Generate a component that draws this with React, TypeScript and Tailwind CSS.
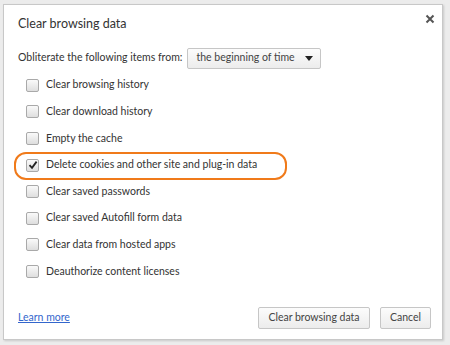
import React from 'react';

const items = [
  { label: 'Clear browsing history', checked: false },
  { label: 'Clear download history', checked: false },
  { label: 'Empty the cache', checked: false },
  { label: 'Delete cookies and other site and plug-in data', checked: true, highlight: true },
  { label: 'Clear saved passwords', checked: false },
  { label: 'Clear saved Autofill form data', checked: false },
  { label: 'Clear data from hosted apps', checked: false },
  { label: 'Deauthorize content licenses', checked: false },
];

function CheckBox({ checked }: { checked: boolean }) {
  return (
    <span className="relative flex h-[13px] w-[13px] items-center justify-center rounded-[2px] border border-[#a9a9a9] bg-gradient-to-b from-[#fafafa] to-[#dedede]">
      {checked && (
        <svg width="10" height="10" viewBox="0 0 10 10">
          <path d="M1.5 5.2 L4 7.8 L8.6 1.6" fill="none" stroke="#222" strokeWidth="1.8" />
        </svg>
      )}
    </span>
  );
}

export default function App() {
  return (
    <div className="h-[345px] w-[450px] whitespace-nowrap bg-[#ececec] pl-[3px] pt-[4px]" style={{ fontFamily: 'Lato, "Noto Sans", sans-serif' }}>
      <div className="flex h-[336px] w-[440px] flex-col border border-[#c8c8c8] bg-white shadow-[1px_1px_2px_rgba(0,0,0,0.15)]">
        {/* titulo */}
        <div className="flex h-[38px] items-start justify-between pl-[14px] pr-[6px] pt-[10px]">
          <span className="text-[12.5px] leading-[18px] text-[#333]">Clear browsing data</span>
          <svg width="10" height="10" viewBox="0 0 10 10" className="mr-[1px] mt-[-1px]">
            <path d="M1.5 1.5 L8.5 8.5 M8.5 1.5 L1.5 8.5" stroke="#555" strokeWidth="2" />
          </svg>
        </div>

        <div className="mt-[4px] flex h-[22px] items-center pl-[14px]">
          <span className="text-[10.5px] text-[#333]">Obliterate the following items from:</span>
          <div className="ml-[5px] flex h-[21px] w-[134px] items-center justify-between rounded-[2px] border border-[#c6c6c6] bg-gradient-to-b from-[#fcfcfc] to-[#ececec] pl-[8px] pr-[7px] text-[10.5px] text-[#444]">
            <span>the beginning of time</span>
            <svg width="8" height="5" viewBox="0 0 8 5">
              <path d="M0 0 L8 0 L4 5 Z" fill="#222" />
            </svg>
          </div>
        </div>

        <div className="mt-[3px] flex flex-col">
          {items.map((it) => (
            <div key={it.label} className="relative flex h-[26.6px] items-center gap-[7px] pl-[22px]">
              {it.highlight && (
                <span className="absolute left-[10px] top-[0px] h-[28px] w-[273px] rounded-[12px] border-[2.5px] border-[#f07a1a]" />
              )}
              <CheckBox checked={it.checked} />
              <span className="text-[10.5px] text-[#333]">{it.label}</span>
            </div>
          ))}
        </div>

        <div className="mt-auto mb-[10px] flex items-center justify-between pl-[14px] pr-[11px]">
          <a className="text-[10.5px] text-[#3366cc] underline">Learn more</a>
          <div className="flex gap-[10px]">
            <button className="h-[22px] w-[112px] rounded-[2px] border border-[#c6c6c6] bg-gradient-to-b from-[#fcfcfc] to-[#ececec] text-[10.5px] text-[#444]">Clear browsing data</button>
            <button className="h-[22px] w-[51px] rounded-[2px] border border-[#c6c6c6] bg-gradient-to-b from-[#fcfcfc] to-[#ececec] text-[10.5px] text-[#444]">Cancel</button>
          </div>
        </div>
      </div>
    </div>
  );
}
